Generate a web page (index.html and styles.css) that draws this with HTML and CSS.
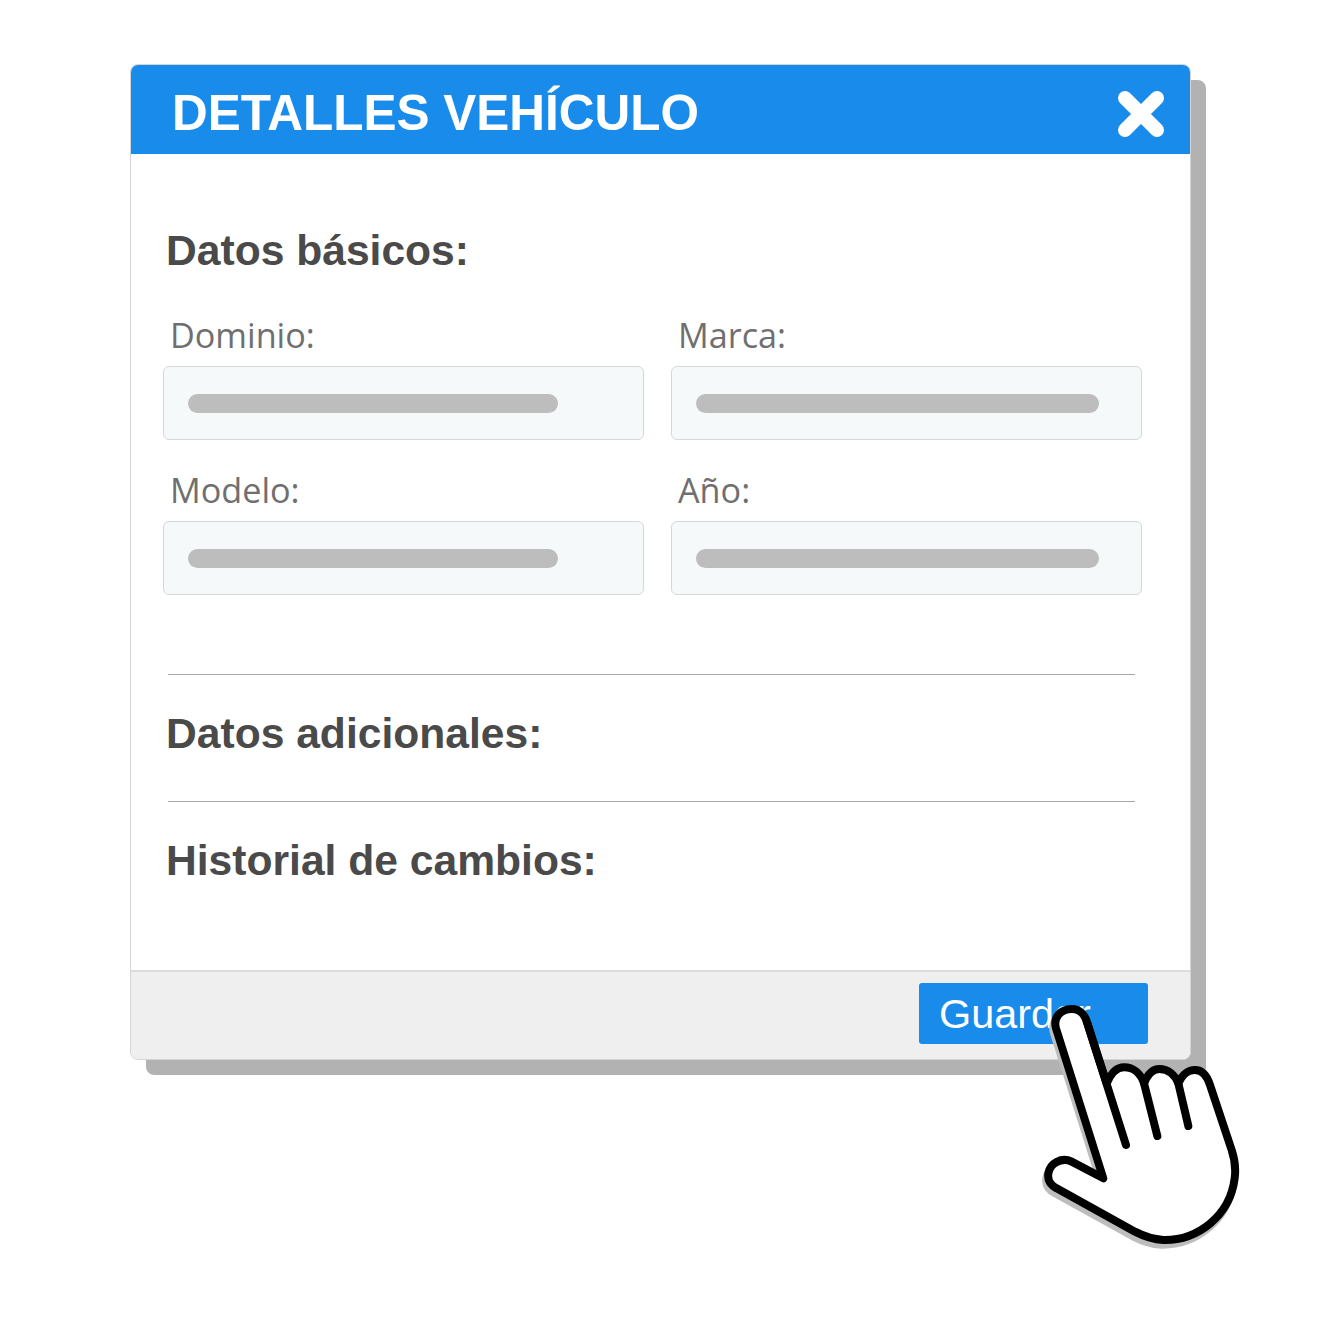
FILE: index.html
```html
<!DOCTYPE html>
<html lang="es">
<head>
    <meta charset="UTF-8">
    <meta name="viewport" content="width=device-width, initial-scale=1.0">
    <title>Detalles vehículo</title>
    <link rel="stylesheet" href="styles.css">
</head>
<body>
    <div class="dialog">
        <div class="dialog-header">
            <h1>DETALLES VEHÍCULO</h1>
            <svg class="close-icon" viewBox="0 0 46 46" aria-hidden="true">
                <path d="M7 7 L39 39 M39 7 L7 39"/>
            </svg>
        </div>

        <div class="dialog-body">
            <h2>Datos básicos:</h2>
            <div class="fields">
                <div class="input-group">
                    <label>Dominio:</label>
                    <div class="field"><div class="bar"></div></div>
                </div>
                <div class="input-group">
                    <label>Marca:</label>
                    <div class="field"><div class="bar bar-long"></div></div>
                </div>
                <div class="input-group">
                    <label>Modelo:</label>
                    <div class="field"><div class="bar"></div></div>
                </div>
                <div class="input-group">
                    <label>Año:</label>
                    <div class="field"><div class="bar bar-long"></div></div>
                </div>
            </div>

            <div class="section section-first">
                <h2>Datos adicionales:</h2>
            </div>
            <div class="section">
                <h2>Historial de cambios:</h2>
            </div>
        </div>

        <div class="dialog-footer">
            <button class="save-btn">Guardar</button>
        </div>
    </div>

    <!-- cursor over the button -->
    <svg class="hand" viewBox="0 0 780 900" aria-hidden="true">
        <path class="hand-shadow" transform="translate(-6 14)" d="M168 205 C158 170 185 147 215 147 C240 147 256 165 262 190 L320 370 C335 335 355 322 372 322 C400 322 422 340 432 370 C445 338 460 327 478 327 C505 327 525 345 535 370 C550 338 565 330 585 330 C610 330 622 350 630 375 L695 570 C705 600 708 625 704 655 C690 770 590 842 490 840 C455 838 430 828 405 815 L170 685 C150 675 142 660 145 640 C150 610 185 590 215 605 L310 655 Z"/>
        <path class="hand-fill" d="M168 205 C158 170 185 147 215 147 C240 147 256 165 262 190 L320 370 C335 335 355 322 372 322 C400 322 422 340 432 370 C445 338 460 327 478 327 C505 327 525 345 535 370 C550 338 565 330 585 330 C610 330 622 350 630 375 L695 570 C705 600 708 625 704 655 C690 770 590 842 490 840 C455 838 430 828 405 815 L170 685 C150 675 142 660 145 640 C150 610 185 590 215 605 L310 655 Z"/>
        <path class="hand-line" d="M262 190 L378 555 M432 370 L472 528 M535 370 L565 498"/>
    </svg>
</body>
</html>
```

FILE: styles.css
```css
body {
    box-sizing: border-box;
    min-height: 100vh;
    margin: 0;
    padding: 64px 0 0 130px;
    background-color: white;
    font-family: "Liberation Sans", Arial, sans-serif;
}
.dialog {
    box-sizing: border-box;
    display: flex;
    flex-direction: column;
    width: 1061px;
    height: 996px;
    background-color: white;
    border: 1px solid #d4d4d4;
    border-radius: 8px;
    box-shadow: 15px 15px 0 -1px #b2b2b2, 16px 16px 0 -1px #b2b2b2;
}
.dialog-header {
    box-sizing: border-box;
    display: flex;
    align-items: center;
    justify-content: space-between;
    height: 89px;
    padding: 6px 26px 0 41px;
    background-color: #198ceb;
    border-radius: 7px 7px 0 0;
}
.dialog-header h1 {
    margin: 0;
    color: white;
    font-size: 49.5px;
    font-weight: bold;
    line-height: 83px;
}
.close-icon {
    width: 46px;
    height: 46px;
    margin-top: 3px;
    fill: none;
    stroke: white;
    stroke-width: 14;
    stroke-linecap: round;
}
.dialog-body {
    flex: 1;
    padding: 0 55px 0 32px;
}
.dialog-body h2 {
    margin: 0 0 0 3px;
    color: #4a4a4a;
    font-size: 42.6px;
    font-weight: bold;
    line-height: 48px;
}
.dialog-body > h2 {
    margin-top: 72px;
}
.fields {
    display: grid;
    grid-template-columns: 481px 471px;
    column-gap: 27px;
    row-gap: 35px;
    margin-top: 46px;
    margin-right: -27px;
}
.input-group label {
    display: block;
    height: 46px;
    padding-left: 7px;
    color: #6f6f6f;
    font-family: "Open Sans", sans-serif;
    font-size: 34.2px;
    line-height: 30px;
}
.field {
    box-sizing: border-box;
    height: 74px;
    padding: 27px 0 0 24px;
    background-color: #f6f9fa;
    border: 1px solid #d3d8d8;
    border-radius: 6px;
}
.bar {
    width: 370px;
    height: 19px;
    background-color: #bdbdbd;
    border-radius: 10px;
}
.bar-long {
    width: 403px;
}
.section {
    height: 92px;
    margin-left: 5px;
    padding-top: 34px;
    border-top: 1px solid #a8a8a8;
}
.section h2 {
    margin-left: -2px;
}
.section-first {
    margin-top: 79px;
}
.dialog-footer {
    box-sizing: border-box;
    display: flex;
    justify-content: flex-end;
    height: 89px;
    padding: 11px 42px 0 0;
    background-color: #efefef;
    border-top: 2px solid #dcdcdc;
    border-radius: 0 0 7px 7px;
}
.save-btn {
    width: 229px;
    height: 61px;
    padding: 2px 0 0 20px;
    background-color: #198ceb;
    color: white;
    border: none;
    border-radius: 3px;
    font-family: "Liberation Sans", Arial, sans-serif;
    font-size: 41.4px;
    text-align: left;
}
.hand {
    position: absolute;
    left: 1000px;
    top: 960px;
    width: 260px;
    height: 300px;
}
.hand-shadow {
    fill: #bdbdbd;
    stroke: #bdbdbd;
    stroke-width: 24;
    stroke-linejoin: round;
}
.hand-fill {
    fill: white;
    stroke: black;
    stroke-width: 24;
    stroke-linejoin: round;
}
.hand-line {
    fill: none;
    stroke: black;
    stroke-width: 24;
    stroke-linecap: round;
}
```
